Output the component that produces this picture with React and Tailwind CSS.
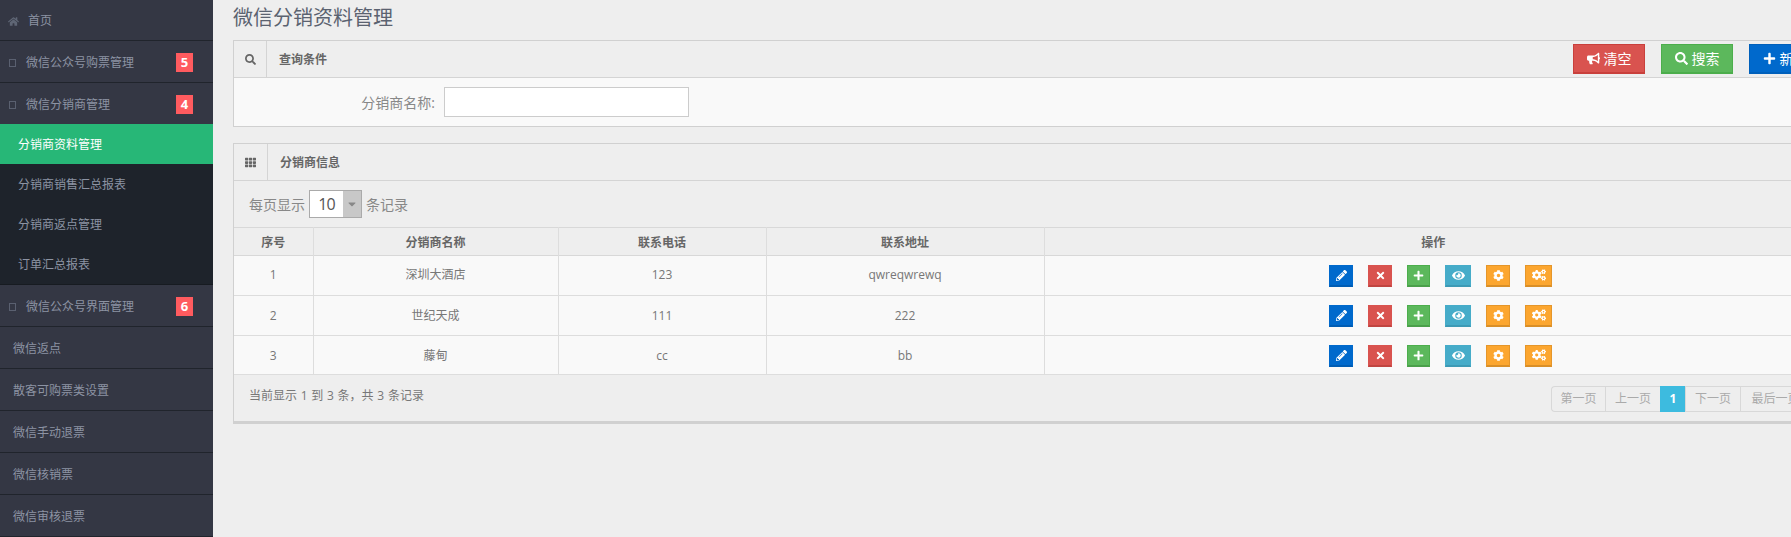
import { FaHome, FaSearch, FaTh, FaBullhorn, FaPlus, FaPencilAlt, FaTimes, FaEye, FaCog, FaCogs, FaCaretDown } from 'react-icons/fa';

const FONT = '"Open Sans", "Noto Sans CJK SC", sans-serif';

const ROWS = [
  ['1', '深圳大酒店', '123', 'qwreqwrewq', 'h-[40px]', 'pb-[2px]', ''],
  ['2', '世纪天成', '111', '222', 'h-[40px]', '', ''],
  ['3', '藤甸', 'cc', 'bb', 'h-[39px]', 'pt-[1px]', 'pt-[1px]'],
];

const ACTIONS = [
  { icon: FaPencilAlt, cls: 'w-[24px] bg-[#0069cc] border-[#0069cc] border-b-[#005cb3]', size: 11 },
  { icon: FaTimes, cls: 'w-[24px] bg-[#d9534f] border-[#d9534f] border-b-[#c04541]', size: 11 },
  { icon: FaPlus, cls: 'w-[23px] bg-[#5cb85c] border-[#4cae4c] border-b-[#4a9f4a]', size: 11 },
  { icon: FaEye, cls: 'w-[26px] bg-[#46acc9] border-[#46acc9] border-b-[#3d9ab5]', size: 13 },
  { icon: FaCog, cls: 'w-[24px] bg-[#fca62f] border-[#e5962a] border-b-[#d98f28]', size: 11 },
  { icon: FaCogs, cls: 'w-[27px] bg-[#fca62f] border-[#e5962a] border-b-[#d98f28]', size: 14 },
];

function NavItem({ label, badge, tofu, home, height = 'h-[42px]', border = true }) {
  return (
    <div className={`${height} flex items-center pt-[2px] text-[12px] text-[#8c93a3] ${border ? 'border-b border-b-[#20242c]' : ''} ${tofu || home ? '' : 'pl-[13px]'}`}>
      {home && <FaHome size={11} className="ml-[8px] mr-[9px] text-[#5f6675]" />}
      {home ? <span className="text-[#8c93a3]">{label}</span> : null}
      {tofu && <span className="ml-[9px] mr-[10px] w-[7px] h-[8px] shrink-0 border border-[#5a6070]" />}
      {!home && <span className="flex-1">{label}</span>}
      {badge && (
        <span className="mr-[20px] w-[17px] h-[19px] flex items-center justify-center bg-[#ff5b5f] text-white text-[13px] font-bold">{badge}</span>
      )}
    </div>
  );
}

function SubItem({ label, active }) {
  return (
    <div className={`h-[40px] flex items-center pt-[2px] pl-[18px] text-[12px] ${active ? 'bg-[#27b777] text-white' : 'text-[#8c93a3]'}`}>
      {label}
    </div>
  );
}

function PanelHead({ icon: Icon, title, iconW, children }) {
  return (
    <div className="h-[37px] flex items-center border-b border-[#d4d4d4] bg-[#eeeeee]">
      <div className={`${iconW} h-full flex items-center justify-center border-r border-[#d4d4d4] text-[#666]`}>
        <Icon size={11} />
      </div>
      <span className="ml-[12px] pt-[2px] text-[12px] font-bold text-[#666]">{title}</span>
      {children}
    </div>
  );
}

function HeadButton({ icon: Icon, label, cls, w }) {
  return (
    <button className={`${w} h-[30px] shrink-0 flex items-center justify-center gap-[4px] border border-b-2 text-white text-[14px] ${cls}`}>
      <Icon size={13} />
      <span>{label}</span>
    </button>
  );
}

function PageLink({ label, w, active, first }) {
  return (
    <div className={`${w} h-full shrink-0 flex items-center justify-center text-[12px] border-y border-l ${first ? 'rounded-l-[4px]' : ''} ${active ? 'bg-[#3dbbdf] border-[#3dbbdf] text-white font-bold' : 'border-[#d8d8d8] text-[#aaaaaa]'}`}>
      {label}
    </div>
  );
}

export default function App() {
  return (
    <div className="w-[1791px] h-[537px] flex overflow-hidden bg-[#eeeeee]" style={{ fontFamily: FONT }}>
      {/* 左侧菜单 */}
      <aside className="w-[213px] shrink-0 bg-[#343744] flex flex-col">
        <NavItem label="首页" home height="h-[41px]" />
        <NavItem label="微信公众号购票管理" tofu badge="5" />
        <NavItem label="微信分销商管理" tofu badge="4" height="h-[41px]" border={false} />
        <div className="bg-[#1e232b] h-[161px] border-b border-b-[#171b21]">
          <SubItem label="分销商资料管理" active />
          <SubItem label="分销商销售汇总报表" />
          <SubItem label="分销商返点管理" />
          <SubItem label="订单汇总报表" />
        </div>
        <NavItem label="微信公众号界面管理" tofu badge="6" />
        <NavItem label="微信返点" />
        <NavItem label="散客可购票类设置" />
        <NavItem label="微信手动退票" />
        <NavItem label="微信核销票" />
        <NavItem label="微信审核退票" />
      </aside>

      {/* 主内容 */}
      <main className="flex-1 min-w-0 pl-[20px] overflow-hidden">
        <h1 className="h-[40px] pb-[5px] flex items-center text-[20px] font-normal text-[#5b6270]">微信分销资料管理</h1>

        <section className="w-[1631px] border border-[#d0d0d0] bg-[#f9f9f9]">
          <PanelHead icon={FaSearch} title="查询条件" iconW="w-[33px]">
            <div className="ml-[1246px] flex gap-[16px] pb-[1px]">
              <HeadButton icon={FaBullhorn} label="清空" w="w-[72px]" cls="bg-[#d9534f] border-[#c9403c]" />
              <HeadButton icon={FaSearch} label="搜索" w="w-[72px]" cls="bg-[#5cb85c] border-[#4cae4c]" />
              <HeadButton icon={FaPlus} label="新增" w="w-[72px]" cls="bg-[#0069cc] border-[#0060bb]" />
            </div>
          </PanelHead>
          <div className="h-[48px] flex items-center">
            <label className="w-[201px] mr-[9px] text-right text-[14px] text-[#888]">分销商名称:</label>
            <input className="w-[245px] h-[30px] mb-[1px] border border-[#cccccc] bg-white" />
          </div>
        </section>

        <section className="mt-[16px] w-[1631px] border border-[#d0d0d0] border-b-[3px] bg-[#eeeeee]">
          <PanelHead icon={FaTh} title="分销商信息" iconW="w-[34px]" />
          <div className="h-[46px] flex items-center pl-[15px] text-[14px] text-[#888]">
            <span>每页显示</span>
            <div className="ml-[4px] mr-[4px] w-[53px] h-[28px] flex border border-[#aaaaaa]">
              <span className="w-[33px] bg-white text-[16px] tracking-[-1px] text-[#555] flex items-center justify-center">10</span>
              <span className="flex-1 bg-[#c8c8c8] flex items-center justify-center text-[#888]">
                <FaCaretDown size={12} />
              </span>
            </div>
            <span>条记录</span>
          </div>

          <table className="w-[1588px] table-fixed border-collapse text-[12px] text-[#777] text-center">
            <thead>
              <tr className="h-[28px] bg-[#eeeeee] text-[#666] border-y border-[#d8d8d8]">
                <th className="w-[79px] pt-[2px] font-bold border-r border-[#dddddd]">序号</th>
                <th className="w-[245px] pt-[2px] font-bold border-r border-[#dddddd]">分销商名称</th>
                <th className="w-[208px] pt-[2px] font-bold border-r border-[#dddddd]">联系电话</th>
                <th className="w-[278px] pt-[2px] font-bold border-r border-[#dddddd]">联系地址</th>
                <th className="pt-[2px] font-bold">操作</th>
              </tr>
            </thead>
            <tbody>
              {ROWS.map(([no, name, tel, addr, h, textCls, btnCls]) => (
                <tr key={no} className={`${h} bg-[#f9f9f9] border-b border-[#dddddd]`}>
                  <td className={`${textCls} border-r border-[#dddddd]`}>{no}</td>
                  <td className={`${textCls} border-r border-[#dddddd]`}>{name}</td>
                  <td className={`${textCls} border-r border-[#dddddd]`}>{tel}</td>
                  <td className={`${textCls} border-r border-[#dddddd]`}>{addr}</td>
                  <td className={btnCls}>
                    <div className="pl-[15px] flex items-center justify-center gap-[15px]">
                      {ACTIONS.map(({ icon: Icon, cls, size }, i) => (
                        <span key={i} className={`${cls} h-[22px] flex items-center justify-center border border-b-2 text-white`}>
                          <Icon size={size} />
                        </span>
                      ))}
                    </div>
                  </td>
                </tr>
              ))}
            </tbody>
          </table>

          <div className="h-[46px] flex pl-[15px] text-[12px] text-[#777]">
            <span className="pt-[12px] [word-spacing:0.6px]">当前显示 1 到 3 条，共 3 条记录</span>
            <div className="ml-[1127px] mt-[11px] h-[26px] flex border-r border-[#d8d8d8]">
              <PageLink label="第一页" w="w-[54px]" first />
              <PageLink label="上一页" w="w-[55px]" />
              <PageLink label="1" w="w-[25px]" active />
              <PageLink label="下一页" w="w-[55px]" />
              <PageLink label="最后一页" w="w-[70px]" />
            </div>
          </div>
        </section>
      </main>
    </div>
  );
}
